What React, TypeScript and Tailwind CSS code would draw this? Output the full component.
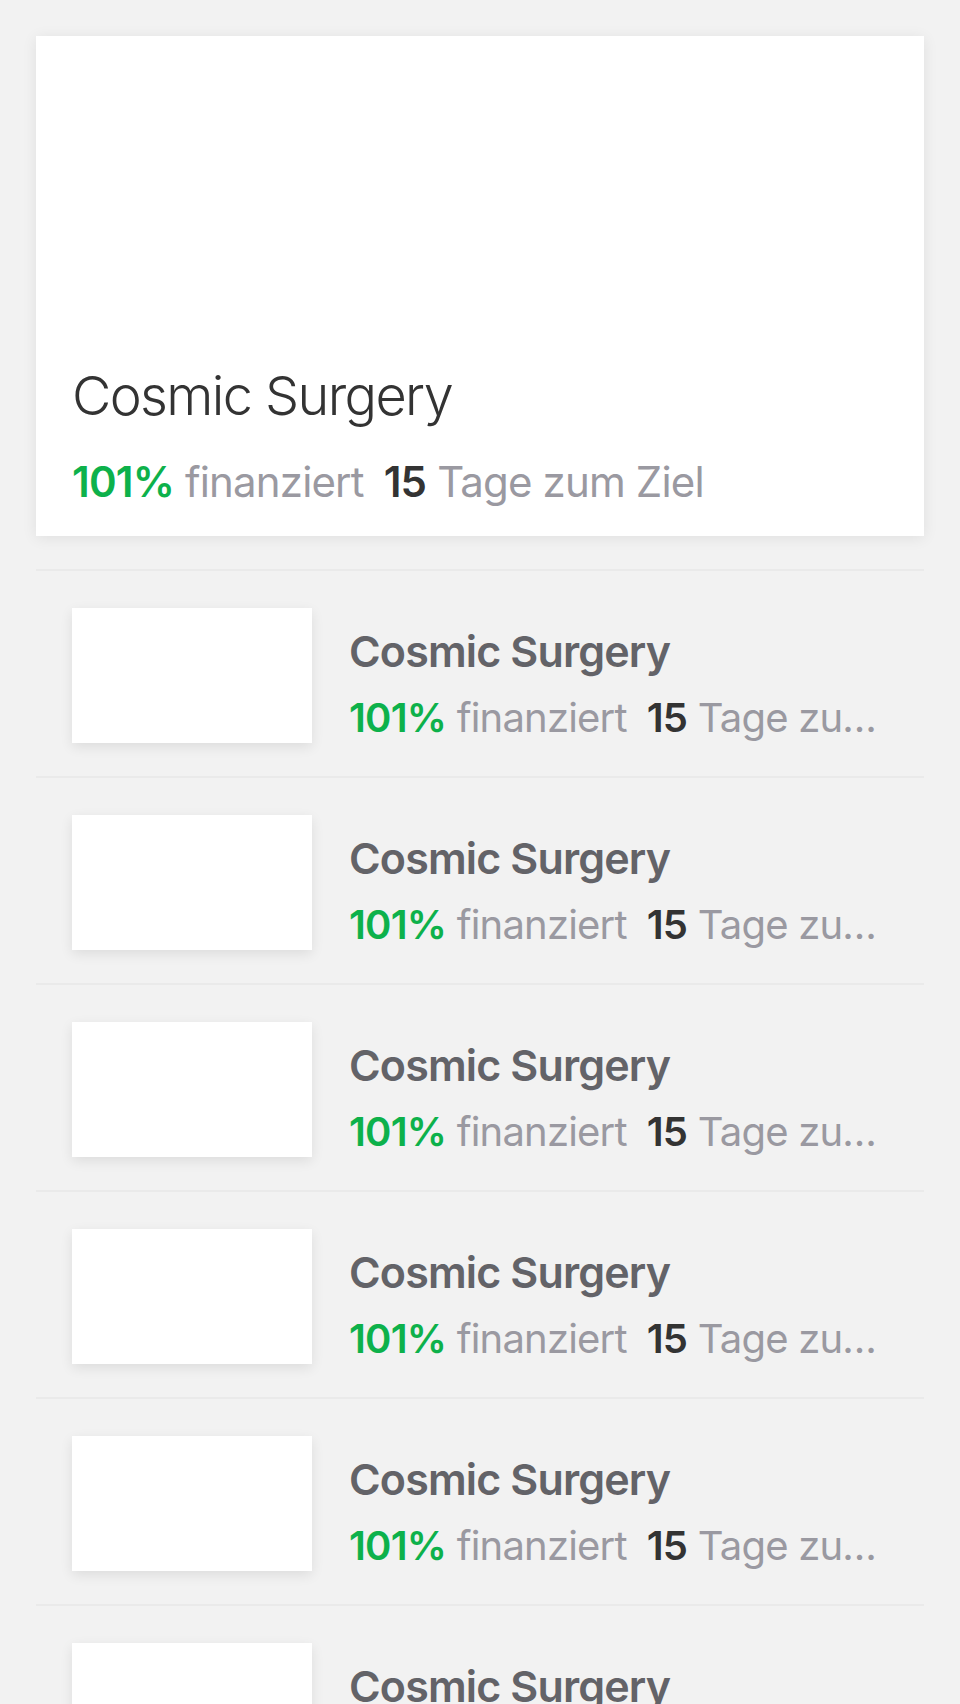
const font = { fontFamily: "Inter, 'Noto Sans', sans-serif" };

function Stats({ big }: { big?: boolean }) {
  return (
    <p
      className={
        big
          ? "text-[42px] leading-none whitespace-nowrap tracking-[-0.02em] text-[#9a99a1]"
          : "overflow-hidden text-ellipsis text-[40px] leading-[1.25] whitespace-nowrap tracking-[-0.02em] text-[#9a99a1]"
      }
    >
      <span className="font-semibold text-[#0db14b]">101%</span> <span>finanziert</span>
      <span className="ml-[20px] font-semibold text-[#333333]">15</span> <span>Tage zum Ziel</span>
    </p>
  );
}

function ProjectRow() {
  return (
    <li className="flex items-start gap-[37px] border-b-2 border-[#eaeaea] pt-[37px] pb-[33px] pl-[36px] pr-[42px]">
      <div className="h-[135px] w-[240px] shrink-0 bg-white shadow-[0_4px_12px_rgba(0,0,0,0.09)]" />
      <div className="min-w-0 flex-1 pt-[22px]">
        <h2 className="text-[43px] leading-none font-semibold tracking-[-0.02em] text-[#636368]">Cosmic Surgery</h2>
        <div className="mt-[20px]">
          <Stats />
        </div>
      </div>
    </li>
  );
}

export default function App() {
  return (
    <main className="min-h-[1704px] bg-[#f2f2f2] px-[36px] pt-[36px]" style={font}>
      <article className="flex h-[500px] flex-col justify-end bg-white px-[36px] pb-[33px] shadow-[0_2px_14px_rgba(0,0,0,0.08)]">
        <h1 className="text-[54px] leading-none font-light tracking-[-0.03em] text-[#333333]">Cosmic Surgery</h1>
        <div className="mt-[38px]">
          <Stats big />
        </div>
      </article>
      <ul className="mt-[33px] border-t-2 border-[#eaeaea]">
        {Array.from({ length: 6 }, (_, i) => (
          <ProjectRow key={i} />
        ))}
      </ul>
    </main>
  );
}
